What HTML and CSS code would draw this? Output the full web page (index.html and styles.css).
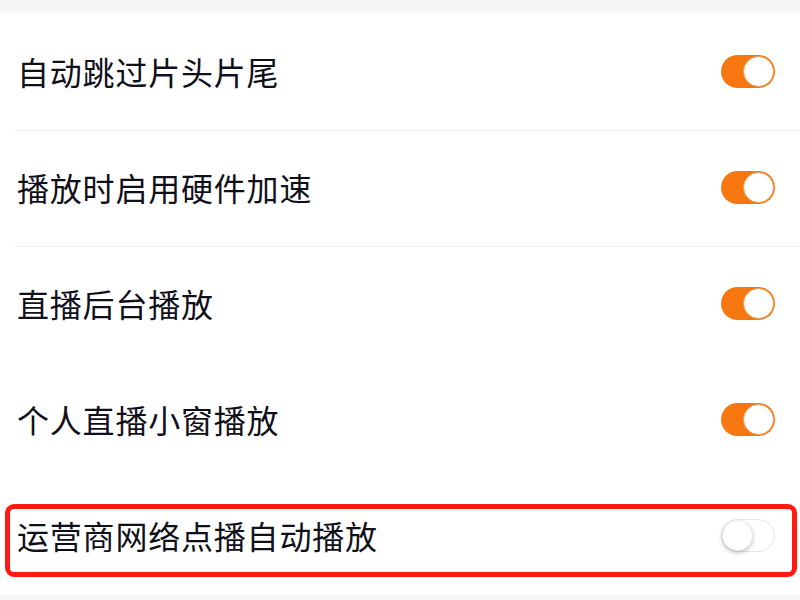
FILE: index.html
```html
<!DOCTYPE html>
<html lang="zh-CN">
<head>
<meta charset="utf-8">
<link rel="stylesheet" href="styles.css">
</head>
<body>
<div class="page">
  <div class="top-strip"></div>
  <div class="list">
    <div class="row sep">
      <span class="label">自动跳过片头片尾</span>
      <span class="toggle on"><span class="knob"></span></span>
    </div>
    <div class="row sep">
      <span class="label">播放时启用硬件加速</span>
      <span class="toggle on"><span class="knob"></span></span>
    </div>
    <div class="row">
      <span class="label">直播后台播放</span>
      <span class="toggle on"><span class="knob"></span></span>
    </div>
    <div class="row">
      <span class="label">个人直播小窗播放</span>
      <span class="toggle on"><span class="knob"></span></span>
    </div>
    <div class="row marked">
      <span class="label">运营商网络点播自动播放</span>
      <span class="toggle off"><span class="knob"></span></span>
      <span class="highlight"></span>
    </div>
  </div>
  <div class="bottom-strip"></div>
</div>
</body>
</html>
```
FILE: styles.css
```css
html, body {
  margin: 0;
  padding: 0;
  background: #ffffff;
}
.page {
  width: 800px;
  height: 600px;
  overflow: hidden;
  display: flex;
  flex-direction: column;
  font-family: "Noto Sans CJK SC", "Noto Sans", sans-serif;
}
.top-strip {
  height: 15px;
  flex: none;
  background: linear-gradient(#f3f3f3, #f6f6f6 60%, #fbfbfb);
}
.list {
  display: flex;
  flex-direction: column;
}
.row {
  position: relative;
  height: 116px;
  display: flex;
  align-items: center;
  justify-content: space-between;
  padding: 0 25px 4px 17px;
  box-sizing: border-box;
}
.row.sep::after {
  content: "";
  position: absolute;
  left: 15px;
  right: 0;
  bottom: 0;
  height: 1px;
  background: #ececec;
}
.label {
  font-size: 32px;
  font-weight: 400;
  color: #10101a;
  line-height: 1;
  letter-spacing: 0.8px;
}
.toggle {
  width: 54px;
  height: 33px;
  border-radius: 17px;
  box-sizing: border-box;
  display: flex;
  align-items: center;
  padding: 1px;
}
.toggle.on {
  background: #f6770f;
  justify-content: flex-end;
}
.toggle.off {
  background: #ffffff;
  border: 1px solid #e6e6e6;
  justify-content: flex-start;
  padding: 0;
}
.knob {
  width: 31px;
  height: 31px;
  border-radius: 50%;
  background: #ffffff;
  box-sizing: border-box;
}
.toggle.on .knob {
  border: 1px solid #e9a15a;
}
.toggle.off .knob {
  box-shadow: 0 2px 4px rgba(0, 0, 0, 0.22);
  border: 1px solid #ececec;
}
.highlight {
  position: absolute;
  left: 5px;
  right: 3px;
  top: 25px;
  height: 73px;
  border: 5px solid #ff1a12;
  border-radius: 9px;
  box-sizing: border-box;
  pointer-events: none;
}
.bottom-strip {
  flex: 1;
  background: #f5f5f7;
}
```
